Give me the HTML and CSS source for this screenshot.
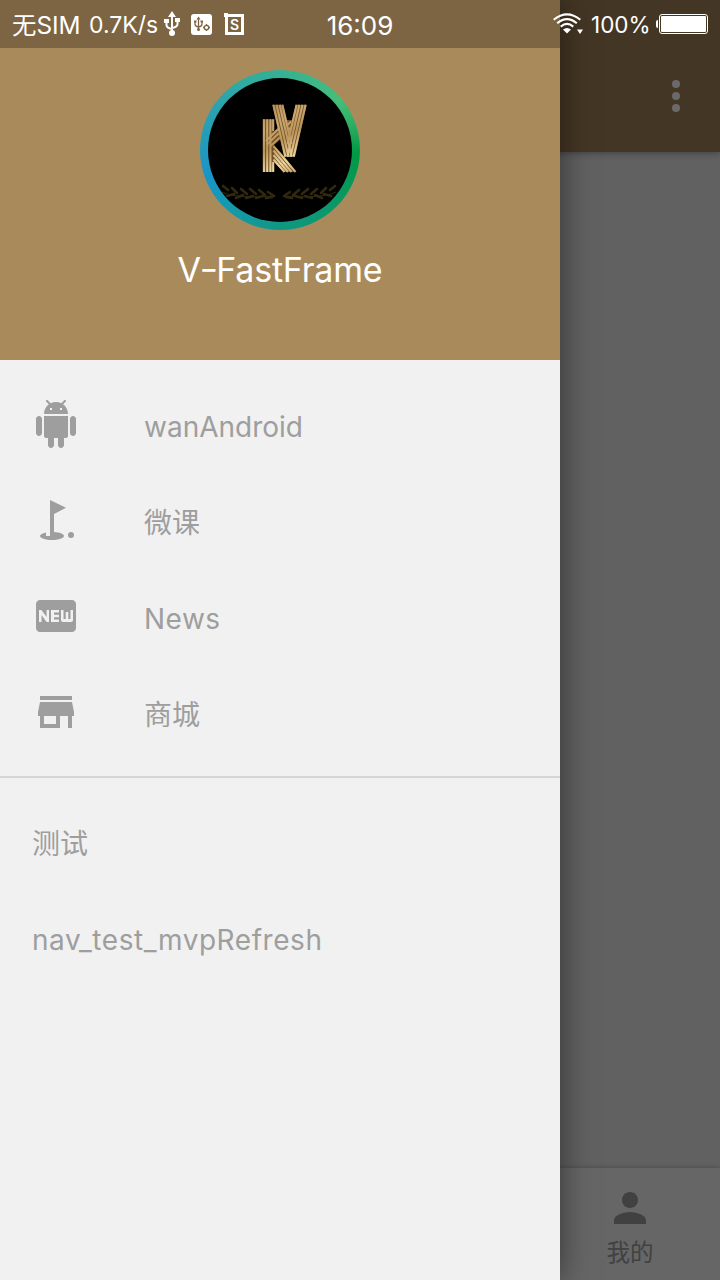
FILE: index.html
```html
<!DOCTYPE html>
<html lang="zh-CN">
<head>
<meta charset="utf-8">
<title>V-FastFrame</title>
<link rel="stylesheet" href="styles.css">
</head>
<body>
<div class="screen">
  <div class="page">
    <header class="toolbar">
      <svg class="more" viewBox="0 0 8 32"><circle cx="4" cy="4" r="4"/><circle cx="4" cy="16" r="4"/><circle cx="4" cy="28" r="4"/></svg>
    </header>
    <main class="content"></main>
    <footer class="tabs">
      <div class="tab">
        <svg class="icon" viewBox="0 0 24 24"><path d="M12 12c2.21 0 4-1.79 4-4s-1.79-4-4-4-4 1.79-4 4 1.79 4 4 4zm0 2c-2.67 0-8 1.34-8 4v2h16v-2c0-2.66-5.33-4-8-4z"/></svg>
        <span class="tab-label">我的</span>
      </div>
    </footer>
  </div>

  <aside class="drawer">
    <div class="profile">
      <div class="avatar">
        <svg class="logo" viewBox="0 0 144 144">
          <defs>
            <linearGradient id="gold" gradientUnits="userSpaceOnUse" x1="54" y1="26" x2="98" y2="95">
              <stop offset="0" stop-color="#b48c52"/><stop offset=".3" stop-color="#cba670"/><stop offset=".5" stop-color="#bb955b"/><stop offset=".75" stop-color="#f0d7a2"/><stop offset="1" stop-color="#b58d50"/>
            </linearGradient>
            <g id="laurel" fill="none" stroke="#30290d">
              <path stroke-width="1" d="M14 114C26 120 46 119 66 118"/>
              <path stroke-width="2.600" stroke-linecap="round" d="M15 108l5 4M24 110l5 5M33 111l6 5M42 111l6 5M51 112l6 5M60 114l6 4M19 118l7-2M28 120l7-3M38 120l7-2M48 120l7-2M58 120l6-1"/>
            </g>
          </defs>
          <circle cx="72" cy="72" r="72"/>
          <path fill="#715226" d="M54.700 41.300h11V54l12-12h8v9L66 68v-2.500L88.500 94H76L65.700 84v10h-11z"/>
          <g fill="none" stroke="url(#gold)" stroke-width="2.100">
            <path d="M56 41.300V94M59.200 41.300V94M62.400 41.300V94M65.200 41.300V53M65.200 84v10"/>
            <path d="M58 63l21-20.500M59 66.500L83 43.500M62 68.500l23-21"/>
            <path d="M65.500 68l22 26M65.500 72.500L83.500 94M65.500 77L80 94M65.500 81.500L76.500 94"/>
          </g>
          <path fill="#000" d="M66 67l8-7 3 19z"/>
          <path fill="#715226" d="M64.300 26.700h11L81.500 54l6.200-27.300h11L87 78.700H76z"/>
          <g fill="none" stroke="url(#gold)" stroke-width="2.200">
            <path d="M65.400 26.700l12 52M68.500 26.700l12 52M71.600 26.700l12 52M74.300 26.700l9 39"/>
            <path d="M97.600 26.700l-12 52M94.500 26.700l-12 52M91.400 26.700l-12 52M88.600 26.700l-9 39"/>
          </g>
          <use href="#laurel"/>
          <use href="#laurel" transform="translate(142 0) scale(-1 1)"/>
        </svg>
      </div>
      <div class="name">V<span class="dash">-</span>FastFrame</div>
    </div>
    <nav class="menu">
      <a class="item"><svg class="icon" viewBox="0 0 24 24"><path d="M6 18c0 .55.45 1 1 1h1v3.5c0 .83.67 1.5 1.5 1.5s1.5-.67 1.5-1.5V19h2v3.5c0 .83.67 1.5 1.5 1.5s1.5-.67 1.5-1.5V19h1c.55 0 1-.45 1-1V8H6v10zM3.5 8C2.67 8 2 8.67 2 9.5v7c0 .83.67 1.5 1.5 1.5S5 17.33 5 16.5v-7C5 8.67 4.33 8 3.5 8zm17 0c-.83 0-1.5.67-1.5 1.5v7c0 .83.67 1.5 1.5 1.5s1.5-.67 1.5-1.5v-7c0-.83-.67-1.5-1.5-1.5zm-4.97-5.84l1.3-1.3c.2-.2.2-.51 0-.71-.2-.2-.51-.2-.71 0l-1.48 1.48C13.85 1.23 12.95 1 12 1c-.96 0-1.86.23-2.66.63L7.85.15c-.2-.2-.51-.2-.71 0-.2.2-.2.51 0 .71l1.31 1.31C6.97 3.26 6 5.01 6 7h12c0-1.99-.97-3.75-2.47-4.84zM10 5H9V4h1v1zm5 0h-1V4h1v1z"/></svg><span class="label">wanAndroid</span></a>
      <a class="item"><svg class="icon" viewBox="0 0 24 24"><circle cx="19.5" cy="19.5" r="1.5"/><path d="M17 5.92L9 2v18H7v-1.73c-1.79.35-3 .99-3 1.73 0 1.1 2.69 2 6 2s6-.9 6-2c0-.99-2.16-1.81-5-1.97V8.98l6-3.06z"/></svg><span class="label">微课</span></a>
      <a class="item"><svg class="icon" viewBox="0 0 24 24"><path d="M20 4H4c-1.11 0-1.99.89-1.99 2L2 18c0 1.11.89 2 2 2h16c1.11 0 2-.89 2-2V6c0-1.11-.89-2-2-2zM8.5 15H7.3l-2.55-3.5V15H3.5V9h1.2l2.6 3.5V9h1.2v6zm5-4.74H11v1.12h2.5v1.26H11v1.11h2.5V15h-4V9h4v1.26zm7 3.74c0 .55-.45 1-1 1h-4c-.55 0-1-.45-1-1V9h1.25v4.51h1.13V9.99h1.25v3.51h1.12V9h1.25v5z"/></svg><span class="label news">News</span></a>
      <a class="item"><svg class="icon" viewBox="0 0 24 24"><path d="M20 4H4v2h16V4zm1 10v-2l-1-5H4l-1 5v2h1v6h10v-6h4v6h2v-6h1zm-9 4H6v-4h6v4z"/></svg><span class="label">商城</span></a>
    </nav>
    <div class="group">
      <div class="item"><span class="label">测试</span></div>
      <a class="item"><span class="label refresh">nav_test_mvpRefresh</span></a>
    </div>
  </aside>

  <div class="status">
    <div class="status-left">
      <span class="sim">无SIM</span>
      <span class="speed">0.7K/s</span>
      <svg class="usb" viewBox="0 0 16 26"><g fill="none" stroke="#fff" stroke-width="2"><path d="M8 4v18M2.500 10v4q0 3 5.500 4M13.500 9v4q0 3-5.500 4"/></g><path fill="#fff" d="M8 0l4 6H4zM0 8h5v4H0zM11 7h5v4h-5z"/><circle cx="8" cy="22" r="3" fill="#fff"/></svg>
      <svg class="debug" viewBox="0 0 21 21"><rect width="21" height="21" rx="3" fill="#fff"/><g fill="none" stroke="#7d6543" stroke-width="1.300"><path d="M7.500 4v12M4 7v3q0 2.500 3.500 3M11 7v3q0 2.500-3.500 3"/><circle cx="15.500" cy="13.500" r="2.200"/><path d="M15.500 10v1.500M15.500 15.500V17M12 13.500h1.500M17.500 13.500H19"/></g><path fill="#7d6543" d="M7.500 2.500l2 3h-4zM3 6.500h2.500v2H3zM9.500 6.500H12v2H9.500z"/><circle cx="7.500" cy="15.500" r="1.500" fill="#7d6543"/></svg>
      <svg class="shot" viewBox="0 0 20 22"><path fill="none" stroke="#fff" stroke-width="3" d="M2.500 2.500h16v18h-16z"/><path fill="#fff" d="M0 0h4v4H0z"/><text class="shot-s" x="10.600" y="16.500" text-anchor="middle">S</text></svg>
    </div>
    <div class="clock">16:09</div>
    <div class="status-right">
      <svg class="wifi" viewBox="0 0 30 22"><g fill="none" stroke="#fff" stroke-width="2.100"><path d="M.7 6.700Q14 -4 27.300 6.700M4.200 10.200Q14 2 23.800 10.200M7.700 13.600Q14 8.200 20.300 13.600"/></g><path fill="#fff" d="M10 16.500q4-3 8 0l-4 4zM24 16.500h6l-3 4.500z"/></svg>
      <span class="percent">100%</span>
      <svg class="battery" viewBox="0 0 52 20"><path fill="#fff" d="M2 6v8Q0 14 0 12V8Q0 6 2 6z"/><rect x="3.500" y=".5" width="48" height="19" rx="2.500" fill="none" stroke="#fff"/><rect x="5" y="2" width="45" height="16" rx="1" fill="#fff"/></svg>
    </div>
  </div>
</div>
</body>
</html>
```
FILE: styles.css
```css
body {
  margin: 0;
  font-family: Inter, "Noto Sans CJK SC", sans-serif;
}
.screen {
  position: relative;
  width: 720px;
  height: 1280px;
  overflow: hidden;
}
.page {
  display: flex;
  flex-direction: column;
  height: 100%;
  background: #616161;
}
.toolbar {
  display: flex;
  justify-content: flex-end;
  align-items: center;
  box-sizing: border-box;
  height: 152px;
  padding: 40px 40px 0 0;
  background: #443624;
  box-shadow: 0 1px 7px rgba(0, 0, 0, .35);
}
.more {
  width: 8px;
  height: 32px;
  fill: #6a6a6a;
}
.content { flex: 1; }
.tabs {
  display: flex;
  justify-content: flex-end;
  height: 112px;
  background: #666;
  box-shadow: 0 -1px 4px rgba(0, 0, 0, .18);
}
.tab {
  display: flex;
  flex-direction: column;
  align-items: center;
  width: 180px;
  padding-top: 16px;
  color: #414141;
}
.icon {
  flex: none;
  width: 48px;
  height: 48px;
  fill: currentColor;
}
.tab-label {
  font-size: 23.5px;
  line-height: 36px;
  margin-top: 3px;
}
.drawer {
  position: absolute;
  inset: 0 auto 0 0;
  width: 560px;
  background: #f1f1f1;
  box-shadow: 0 0 30px rgba(0, 0, 0, .5);
}
.profile {
  display: flex;
  flex-direction: column;
  align-items: center;
  box-sizing: border-box;
  height: 360px;
  padding-top: 70px;
  background: #a98b5b;
}
.avatar {
  box-sizing: border-box;
  width: 160px;
  height: 160px;
  padding: 8px;
  border-radius: 50%;
  background: conic-gradient(#35b094, #45be7a 50deg, #2fae63 70deg, #009944 92deg, #0b9868 135deg, #109783 180deg, #1699ac 220deg, #1a94c8 250deg, #279fb5 290deg, #30aaa2 330deg, #35b094);
}
.logo {
  display: block;
  width: 144px;
  height: 144px;
}
.name {
  margin-top: 18px;
  color: #fff;
  font-size: 34px;
  line-height: 44px;
  letter-spacing: -.2px;
  white-space: nowrap;
}
.dash {
  display: inline-block;
  transform: translateY(-1px) scaleX(1.2);
}
.menu {
  padding: 16px 0;
  border-bottom: 2px solid #d5d5d5;
}
.item {
  display: flex;
  align-items: center;
  gap: 64px;
  height: 96px;
  padding: 0 32px;
  color: #9e9e9e;
}
.label {
  font-size: 28px;
  line-height: 40px;
  white-space: nowrap;
}
.menu .label { padding-top: 5px; }
.news { letter-spacing: .5px; }
.refresh { letter-spacing: .55px; }
.group { padding-top: 18px; }
.status {
  position: absolute;
  inset: 0 0 auto 0;
  display: grid;
  grid-template-columns: 320px 80px 320px;
  align-items: center;
  height: 48px;
  background: linear-gradient(90deg, #7d6543 560px, transparent 560px);
  color: #fff;
}
.status-left,
.status-right {
  display: flex;
  align-items: center;
  height: 48px;
  line-height: 36px;
  white-space: nowrap;
}
.status-left { padding-left: 12px; }
.status-right { justify-content: flex-end; padding-right: 12px; }
.sim,
.speed,
.percent { padding-top: 2px; }
.sim { width: 77px; font-size: 24.4px; }
.speed { width: 75px; font-size: 23px; }
.usb { width: 16px; height: 26px; }
.debug { width: 21px; height: 21px; margin-left: 11px; }
.shot { width: 20px; height: 22px; margin-left: 12px; }
.shot-s {
  fill: #fff;
  font-size: 14px;
  font-weight: 600;
}
.clock {
  text-align: center;
  font-size: 26px;
  line-height: 36px;
  padding-top: 4px;
}
.wifi { width: 30px; height: 22px; margin-right: 8px; }
.percent { width: 65px; font-size: 22.5px; }
.battery { width: 52px; height: 20px; }
```
